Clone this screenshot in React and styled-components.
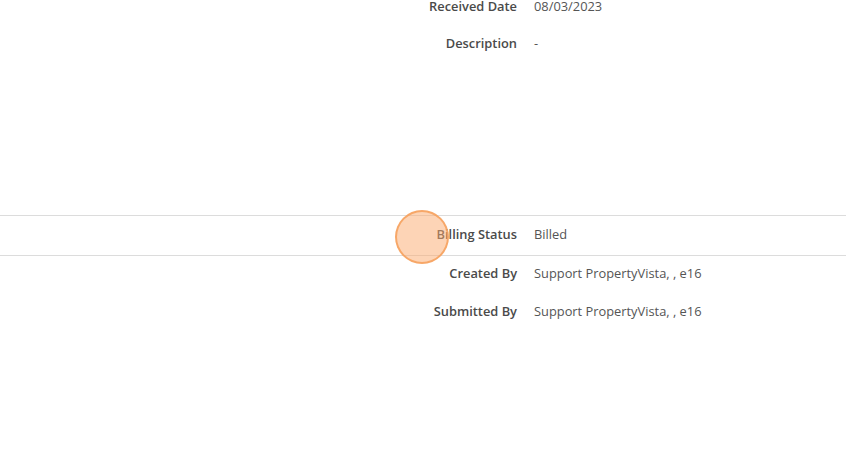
import React from 'react';
import styled, { createGlobalStyle } from 'styled-components';

const GlobalStyle = createGlobalStyle`
  html, body {
    margin: 0;
    padding: 0;
    background: #fff;
    overflow: hidden;
  }
  body {
    font-family: "Open Sans", "Liberation Sans", sans-serif;
    color: #4d4d4d;
  }
`;

const Page = styled.div`
  position: relative;
  width: 846px;
  height: 474px;
  overflow: hidden;
`;

const Scroller = styled.div`
  margin-top: -13px;
`;

const Section = styled.div`
  display: flex;
  flex-direction: column;
  min-height: ${p => p.$minHeight || 0}px;
  margin-top: ${p => p.$shift || 0}px;
  border-top: ${p => (p.$bordered ? '1px solid #dcdcdc' : 'none')};
  border-bottom: ${p => (p.$bordered ? '1px solid #dcdcdc' : 'none')};
  padding-bottom: ${p => p.$padBottom || 0}px;
`;

const Row = styled.div`
  display: grid;
  grid-template-columns: 517px 1fr;
  column-gap: 17px;
  align-items: center;
  height: ${p => p.$h || 38}px;
  font-size: 12.85px;
  line-height: 18px;
`;

const Label = styled.div`
  text-align: right;
  font-weight: 600;
  color: #4a4a4a;
`;

const Value = styled.div`
  color: #555;
`;

const Tap = styled.div`
  position: absolute;
  left: 395px;
  top: 210px;
  width: 50px;
  height: 50px;
  border-radius: 50%;
  background: rgba(252, 170, 110, 0.5);
  border: 2px solid rgba(246, 160, 90, 0.85);
`;

const Field = ({ label, value, h }) => (
  <Row $h={h}>
    <Label>{label}</Label>
    <Value>{value}</Value>
  </Row>
);

export default function App() {
  return (
    <Page>
      <GlobalStyle />
      <Scroller>
        <Section $minHeight={228}>
          <Field label="Received Date" value="08/03/2023" h={37} />
          <Field label="Description" value="-" />
        </Section>
        <Section $bordered $padBottom={3}>
          <Field label="Billing Status" value="Billed" h={36} />
        </Section>
        <Section $shift={-2}>
          <Field label="Created By" value="Support PropertyVista, , e16" />
          <Field label="Submitted By" value="Support PropertyVista, , e16" />
        </Section>
      </Scroller>
      <Tap />
    </Page>
  );
}
